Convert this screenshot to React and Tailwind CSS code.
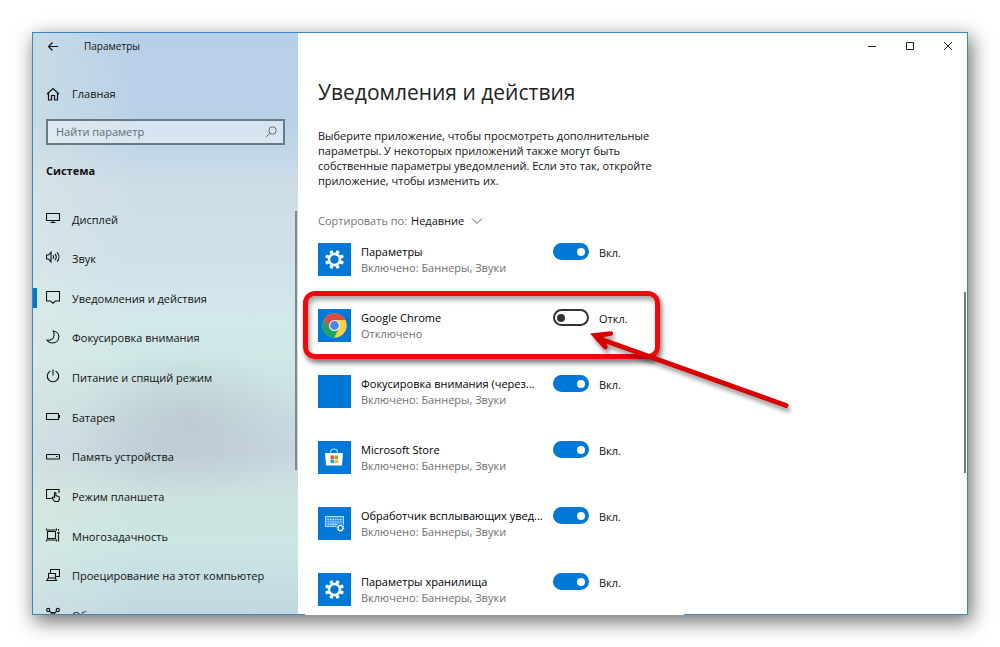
import React from "react";

function Icon({ children }) {
  return (
    <svg
      viewBox="0 0 14 14"
      className="mb-1 size-3.5 shrink-0"
      fill="none"
      stroke="currentColor"
      strokeWidth="1.1"
      aria-hidden="true"
    >
      {children}
    </svg>
  );
}

const navItems = [
  {
    label: "Дисплей",
    icon: (
      <>
        <path d="M.5 2.5h13v7H.5z" />
        <path d="M7 9.5v2M4.5 11.500h5" />
      </>
    ),
  },
  {
    label: "Звук",
    icon: (
      <>
        <path d="M.5 5h2L5 2.2v9.6L2.500 9H.5z" />
        <path d="M7 5.200c.7 1.100.7 2.500 0 3.600M9 3.800c1.500 1.900 1.500 4.500 0 6.400M11 2.300c2.600 2.800 2.600 6.600 0 9.400" />
      </>
    ),
  },
  {
    label: "Уведомления и действия",
    active: true,
    icon: <path d="M.5 1.500h13v9.500H9.300L7 13.300 4.700 11H.5z" />,
  },
  {
    label: "Фокусировка внимания",
    icon: (
      <path d="M7.200 1c3.500.4 5.900 3 5.600 6.300-.3 3.200-2.800 5.700-6.200 5.700-2.300 0-4.300-.9-5.600-2.800 3.500.4 6.200-1 6.900-4.200.4-1.800.2-3.500-.7-5z" />
    ),
  },
  {
    label: "Питание и спящий режим",
    icon: (
      <>
        <path d="M4.500 2a5.700 5.700 0 1 0 5 0" />
        <path d="M7 .5v6" />
      </>
    ),
  },
  {
    label: "Батарея",
    icon: (
      <>
        <path d="M.5 4.500h12v6H.5z" />
        <path d="M13.500 6v3" />
      </>
    ),
  },
  {
    label: "Память устройства",
    icon: (
      <>
        <rect x=".5" y="5.500" width="13" height="4.500" rx=".8" />
        <path d="M10 7.500h1.500" />
      </>
    ),
  },
  {
    label: "Режим планшета",
    icon: (
      <>
        <path d="M5.500 10.500h-5v-9h12.500v3.500" />
        <path d="M8.500 9.500V5.200c0-.9 1.400-.9 1.400 0v2.600l2.300.5c.8.2 1.300.7 1.200 1.500l-.5 2.700c-.2.700-.5 1-1.200 1H9.300c-.6 0-1-.2-1.300-.7L6 9.700c.5-.7 1.400-.9 2.500-.2z" />
      </>
    ),
  },
  {
    label: "Многозадачность",
    icon: (
      <>
        <path d="M1.500 3.500h8v7h-8z" />
        <path d="M.5 .5v1.500h10V.5M.5 13.500V12h10v1.500" />
        <path d="M12.500 1v2M12.500 6.500v7" />
        <path d="M11.500 5h2" strokeWidth="2" />
      </>
    ),
  },
  {
    label: "Проецирование на этот компьютер",
    icon: (
      <>
        <path d="M4.500 5.500v-4h9v7h-4" />
        <path d="M2.500 5.500h7v4.500h-7z" />
        <path d="M2.200 10.200L.7 12.500h9.800L9.200 10.200" />
      </>
    ),
  },
  {
    label: "Общие возможности",
    icon: (
      <>
        <circle cx="2.200" cy="3" r="1.600" />
        <circle cx="11.800" cy="3" r="1.600" />
        <path d="M3.400 4.200L10.500 11M10.600 4.200L3.500 11M5 5.500h4" />
        <circle cx="2.200" cy="12" r="1.600" />
        <circle cx="11.800" cy="12" r="1.600" />
      </>
    ),
  },
];

function GearGlyph() {
  return (
    <svg viewBox="0 0 33 33" className="size-full" aria-hidden="true">
      <g fill="#fff">
        {[0, 45, 90, 135, 180, 225, 270, 315].map((a) => (
          <rect key={a} x="14.800" y="7" width="3.400" height="5" rx=".4" transform={`rotate(${a + 22.5} 16.5 16.500)`} />
        ))}
      </g>
      <circle cx="16.500" cy="16.500" r="5.500" fill="none" stroke="#fff" strokeWidth="2.400" />
    </svg>
  );
}

function ChromeGlyph() {
  return (
    <svg viewBox="0 0 33 33" className="size-full" aria-hidden="true">
      <circle cx="16.500" cy="16.500" r="12" fill="#fbd043" />
      <path d="M6.100 10.500A12 12 0 0 0 16.500 28.500L21 19.100 12 19.100z" fill="#1fa463" />
      <path d="M16.500 11.100H27.200A12 12 0 0 1 16.500 28.500L21.200 19.200z" fill="#fbd043" />
      <path d="M6.100 10.500A12 12 0 0 1 27.200 11.100H16.500L11.800 19.200z" fill="#dd4b3e" />
      <circle cx="16.500" cy="16.500" r="5.500" fill="#f3f5f7" />
      <circle cx="16.500" cy="16.500" r="4.400" fill="#4a86ec" />
    </svg>
  );
}

function StoreGlyph() {
  return (
    <svg viewBox="0 0 33 33" className="size-full" aria-hidden="true">
      <path d="M12.500 13v-1.500c0-4.500 7-4.500 7 0V13" fill="none" stroke="#9fd0f7" strokeWidth="1.300" />
      <path d="M7 12h18l-1 12.500H8z" fill="#fff" />
      <path d="M12.500 14.500h3.500v3.500h-3.500z" fill="#e8552d" />
      <path d="M16.500 14.500H20v3.500h-3.500z" fill="#7fba2a" />
      <path d="M12.500 18.500h3.500v3.500h-3.500z" fill="#1b9de2" />
      <path d="M16.500 18.500H20v3.500h-3.500z" fill="#fbb912" />
    </svg>
  );
}

function KeyboardGlyph() {
  return (
    <svg viewBox="0 0 33 33" className="size-full" fill="none" aria-hidden="true">
      <rect x="7.500" y="9.500" width="18" height="10" fill="#3f9be8" stroke="#b9dcfa" />
      <path d="M9.500 12.500h14M9.500 14.800h14" stroke="#b9dcfa" strokeDasharray="1.500 1" />
      <path d="M9.500 17.200h2M12.500 17.200h7" stroke="#d5eafc" />
      <circle cx="22.500" cy="21" r="4.300" fill="#0078d7" />
      <circle cx="22.500" cy="21" r="2.500" stroke="#fff" strokeWidth="1.200" />
      <circle cx="22.500" cy="21" r="3.300" stroke="#fff" strokeWidth="1" strokeDasharray="1.200 1.390" />
    </svg>
  );
}

const apps = [
  { id: "settings", name: "Параметры", on: true, glyph: <GearGlyph /> },
  { id: "chrome", name: "Google Chrome", on: false, glyph: <ChromeGlyph />, marked: true },
  { id: "focus", name: "Фокусировка внимания (через...", on: true, glyph: null },
  { id: "store", name: "Microsoft Store", on: true, glyph: <StoreGlyph /> },
  { id: "popup", name: "Обработчик всплывающих увед...", on: true, glyph: <KeyboardGlyph /> },
  { id: "storage", name: "Параметры хранилища", on: true, glyph: <GearGlyph /> },
];

function Callout() {
  return (
    <div className="pointer-events-none absolute -top-[18px] -left-[15px] h-[68px] w-[357px]" aria-hidden="true">
      <div className="size-full rounded-xl border-[5px] border-[#f20808] shadow-[2px_4px_5px_rgba(0,0,0,0.5),inset_2px_4px_5px_rgba(0,0,0,0.35)]" />
      <svg
        viewBox="0 0 210 90"
        className="absolute top-[38px] left-[282px] h-[90px] w-[210px] overflow-visible drop-shadow-[2px_4px_2px_rgba(0,0,0,0.4)]"
      >
        <path d="M14 9.500L201 76.500" stroke="#d90000" strokeWidth="5" strokeLinecap="round" />
        <path
          d="M5 4.500L25.500 2.200Q28.500 2.200 28 5Q27.500 6.800 25 7L19 8L22.500 17Q23 20 20.500 20.500Q18.800 20.500 17.500 18.500z"
          fill="#d90000"
        />
      </svg>
    </div>
  );
}

function AppRow({ app }) {
  return (
    <li className="relative flex h-[66px] items-start">
      <span className="size-[33px] shrink-0 bg-[#0078d7]">{app.glyph}</span>
      <div className="ml-2.5 w-[192px] pt-px leading-4 whitespace-nowrap">
        <p className="text-black">{app.name}</p>
        <p className="text-[#6f6f6f]">{app.on ? "Включено: Баннеры, Звуки" : "Отключено"}</p>
      </div>
      <label className="flex items-start gap-2.5 leading-[17px]">
        <input
          type="checkbox"
          role="switch"
          aria-label={app.name}
          defaultChecked={app.on}
          className="flex h-[17px] w-9 appearance-none items-center rounded-full border-2 border-[#333] px-0.5 before:size-2 before:rounded-full before:bg-[#333] checked:justify-end checked:border-[#0078d7] checked:bg-[#0078d7] checked:before:bg-white"
        />
        <span className="pt-px">{app.on ? "Вкл." : "Откл."}</span>
      </label>
      {app.marked && <Callout />}
    </li>
  );
}

function Sidebar() {
  return (
    <aside className="relative flex w-[265px] shrink-0 flex-col overflow-hidden bg-[radial-gradient(ellipse_110px_80px_at_155px_390px,rgba(160,165,172,0.28),transparent),linear-gradient(to_right,rgba(224,236,226,0.4),transparent_40%),linear-gradient(to_bottom,#b7d0e8_0%,#b9d2e8_16%,#cddde7_26%,#cfe0ea_38%,#d2e7eb_48%,#cfe8e6_56%,#c9dde1_65%,#c5d5df_72%,#cde3df_80%,#cbe6e4_88%,#c0d8e2_100%)]">
      <header className="flex h-[26px] shrink-0 items-center pt-px pl-3.5 text-[10px]">
        <button type="button" aria-label="Назад" className="w-[37px]">
          <svg viewBox="0 0 12 12" className="size-3" fill="none" stroke="currentColor" strokeWidth="1.200">
            <path d="M11 5.500H1.500M5.500 1.500L1.500 5.500 5.500 9.500" />
          </svg>
        </button>
        <span>Параметры</span>
      </header>
      <a href="#home" className="mt-[21px] flex h-7 shrink-0 items-center gap-3 pl-[13px]">
        <svg viewBox="0 0 14 14" className="size-3.5" fill="none" stroke="currentColor" strokeWidth="1.200" aria-hidden="true">
          <path d="M1 7l6-5.500L13 7M2.500 6v7h3V8.500h3V13h3V6" />
        </svg>
        Главная
      </a>
      <div className="mx-[13px] mt-[11px] flex h-[26px] shrink-0 items-center border-2 border-[#6b7b86] bg-white/40 pr-1.5 pl-2">
        <input
          type="search"
          aria-label="Найти параметр"
          placeholder="Найти параметр"
          className="min-w-0 flex-1 bg-transparent outline-none placeholder:text-[#5f6e79]"
        />
        <svg viewBox="0 0 12 12" className="size-3" fill="none" stroke="#5f6e79" aria-hidden="true">
          <circle cx="7.500" cy="4.500" r="3.700" />
          <path d="M4.800 7.200L.8 11.200" />
        </svg>
      </div>
      <h2 className="mt-4 pl-[13px] leading-5 font-bold">Система</h2>
      <nav className="mt-[19px] min-h-0 flex-1 overflow-hidden">
        <ul className="grid h-[436px] auto-rows-fr">
          {navItems.map((item) => (
            <li key={item.label} className="flex items-center">
              <span className={item.active ? "mb-0.5 h-5 w-1 bg-[#0078d7]" : "h-5 w-1"} />
              <a href="#section" className="flex items-center gap-3 pl-[9px] whitespace-nowrap">
                <Icon>{item.icon}</Icon>
                {item.label}
              </a>
            </li>
          ))}
        </ul>
      </nav>
      <span className="absolute top-[178px] right-px h-[259px] w-0.5 bg-[#7d888e]" />
    </aside>
  );
}

function WindowControls() {
  return (
    <div className="flex h-[26px] shrink-0 items-center justify-end text-[#222]">
      <button type="button" aria-label="Свернуть" className="flex w-[38px] justify-center">
        <svg viewBox="0 0 10 10" className="size-2.5" fill="none" stroke="currentColor">
          <path d="M1 5.500h8" />
        </svg>
      </button>
      <button type="button" aria-label="Развернуть" className="flex w-[38px] justify-center">
        <svg viewBox="0 0 10 10" className="size-2.5" fill="none" stroke="currentColor">
          <path d="M1.500 1.500h7v7h-7z" />
        </svg>
      </button>
      <button type="button" aria-label="Закрыть" className="flex w-[38px] justify-center">
        <svg viewBox="0 0 10 10" className="size-2.5" fill="none" stroke="currentColor">
          <path d="M1 1l8 8M9 1L1 9" />
        </svg>
      </button>
    </div>
  );
}

export default function App() {
  return (
    <div className="flex h-screen overflow-hidden bg-white p-8 font-['Open_Sans','Noto_Sans',sans-serif] text-[11px] text-[#111]">
      <div className="relative flex min-w-0 flex-1 border border-[#3f86bd] bg-white shadow-[3px_6px_18px_1px_rgba(0,0,0,0.55)]">
        <Sidebar />
        <main className="relative flex min-w-0 flex-1 flex-col">
          <WindowControls />
          <div className="px-5">
            <h1 className="mt-[17px] text-[21px] leading-8 text-[#222]">Уведомления и действия</h1>
            <p className="mt-5 max-w-[340px] leading-[15px]">
              Выберите приложение, чтобы просмотреть дополнительные параметры. У некоторых приложений также могут быть
              собственные параметры уведомлений. Если это так, откройте приложение, чтобы изменить их.
            </p>
            <div className="mt-[25px] flex items-center gap-1 leading-4">
              <label htmlFor="sort" className="text-[#767676]">
                Сортировать по:
              </label>
              <select id="sort" className="appearance-none font-medium">
                <option>Недавние</option>
              </select>
              <svg viewBox="0 0 12 8" className="ml-0.5 h-2 w-3" fill="none" stroke="#666" aria-hidden="true">
                <path d="M1 1.500l5 5 5-5" />
              </svg>
            </div>
            <ul className="mt-3.5">
              {apps.map((app) => (
                <AppRow key={app.id} app={app} />
              ))}
            </ul>
          </div>
          <span className="absolute top-[259px] right-px h-[181px] w-0.5 bg-[#777]" />
        </main>
        <span className="absolute -bottom-px left-[272px] h-px w-[379px] bg-white" />
      </div>
    </div>
  );
}
